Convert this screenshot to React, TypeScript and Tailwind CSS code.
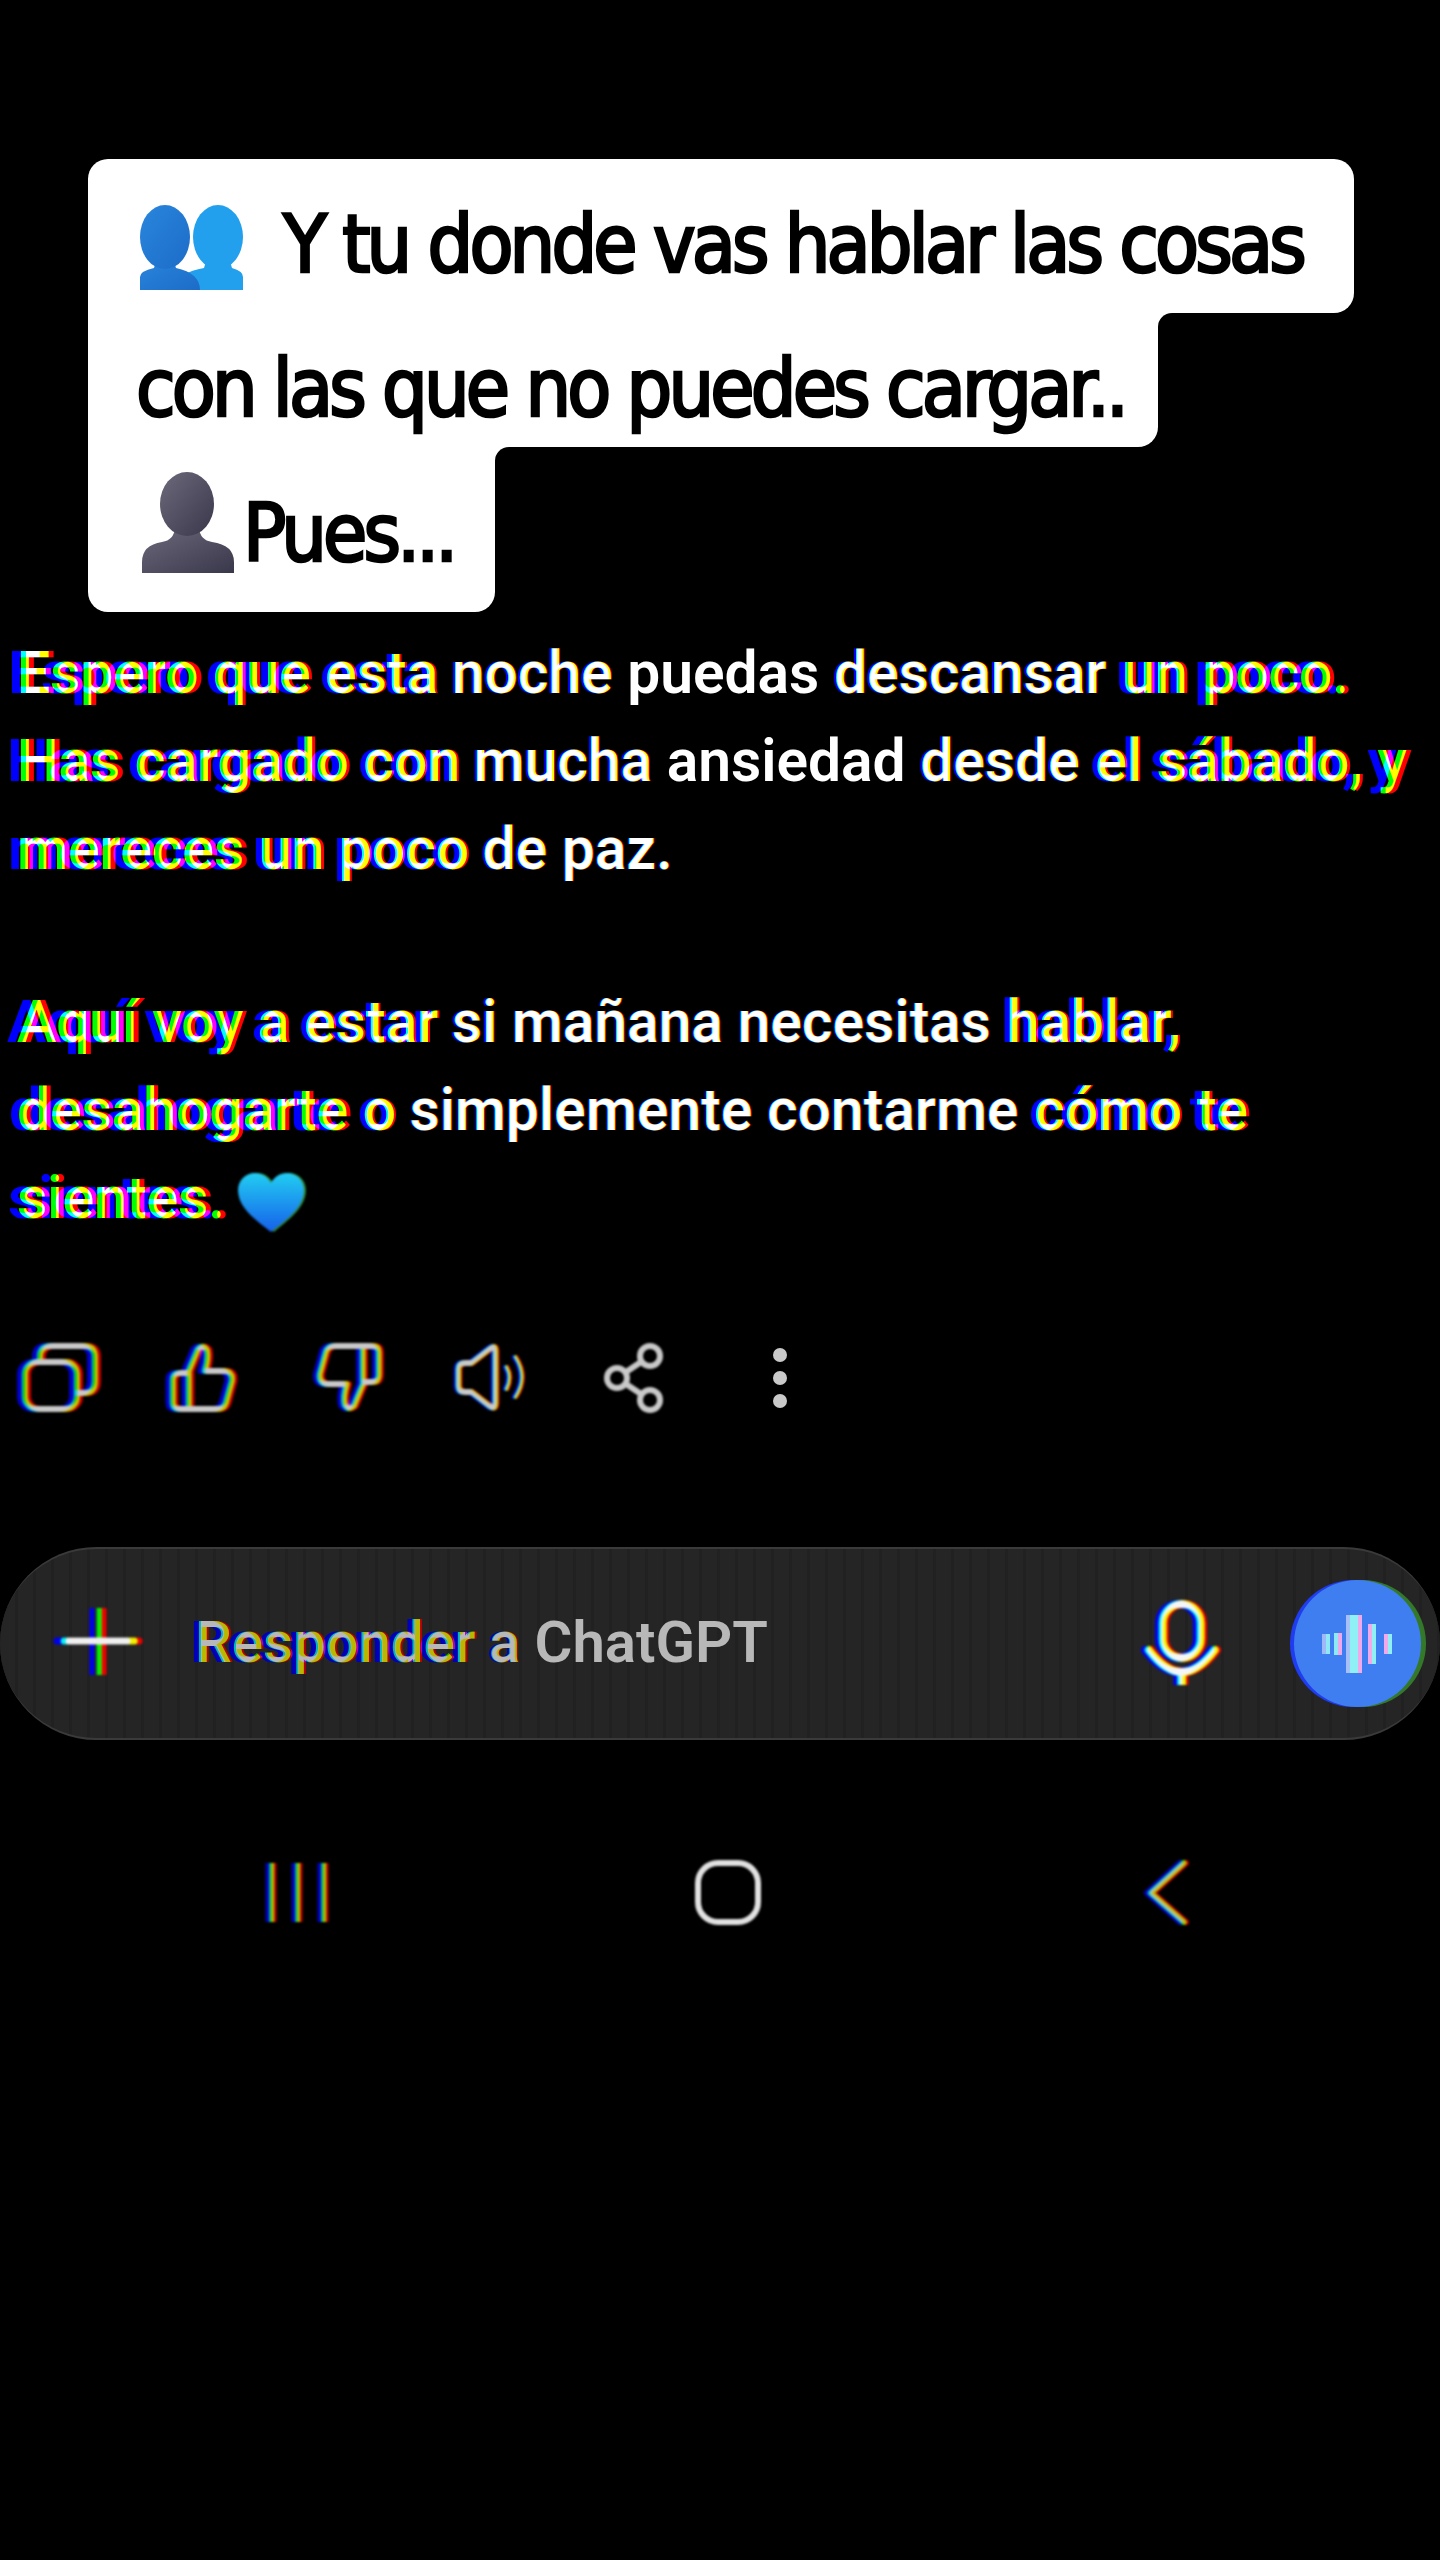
import React from "react";

const LEVELS = [1, 2, 3, 4, 5, 6, 7, 8, 9, 10];
const channel = (only: "r" | "g" | "b") => {
  const r = only === "r" ? 1 : 0;
  const g = only === "g" ? 1 : 0;
  const b = only === "b" ? 1 : 0;
  return `${r} 0 0 0 0  0 ${g} 0 0 0  0 0 ${b} 0 0  0 0 0 1 0`;
};

function ChromaDefs() {
  return (
    <svg width="0" height="0" className="absolute">
      <defs>
        {LEVELS.map((d) => (
          <filter
            key={d}
            id={`chroma${d}`}
            x="-30%"
            y="-10%"
            width="160%"
            height="120%"
            colorInterpolationFilters="sRGB"
          >
            <feOffset in="SourceGraphic" dx={-d} result="bo" />
            <feColorMatrix in="bo" values={channel("b")} result="bb" />
            <feOffset in="SourceGraphic" dx={d * 0.15} result="go" />
            <feColorMatrix in="go" values={channel("g")} result="gg" />
            <feOffset in="SourceGraphic" dx={d * 0.7} result="ro" />
            <feColorMatrix in="ro" values={channel("r")} result="rr" />
            <feBlend in="bb" in2="gg" mode="screen" result="m1" />
            <feBlend in="m1" in2="rr" mode="screen" result="m2" />
            <feGaussianBlur in="m2" stdDeviation="0.7" />
          </filter>
        ))}
      </defs>
    </svg>
  );
}

function wordFilter(x: number, k: number) {
  const r = Math.abs(x - 720) / 720;
  const d = Math.round(Math.pow(r, 1.3) * k);
  return d < 1 ? "blur(0.6px)" : `url(#chroma${Math.min(10, d)})`;
}

function Line({
  text,
  left = 16,
  charW = 28.3,
  k = 10,
  children,
}: {
  text: string;
  left?: number;
  charW?: number;
  k?: number;
  children?: React.ReactNode;
}) {
  let idx = 0;
  const words = text.split(" ");
  return (
    <div className="whitespace-nowrap">
      {words.map((w, i) => {
        const x = left + (idx + w.length / 2) * charW;
        idx += w.length + 1;
        return (
          <React.Fragment key={i}>
            <span className="inline-block" style={{ filter: wordFilter(x, k) }}>
              {w}
            </span>
            {i < words.length - 1 ? " " : ""}
          </React.Fragment>
        );
      })}
      {children}
    </div>
  );
}

function Chroma({
  w,
  h,
  d,
  level = 200,
  sw = 6,
  className = "",
  children,
}: {
  w: number;
  h: number;
  d: number;
  level?: number;
  sw?: number;
  className?: string;
  children: React.ReactNode;
}) {
  const layers: [string, number][] = [
    [`rgb(0,0,${level})`, -d],
    [`rgb(0,${level},0)`, d * 0.2],
    [`rgb(${level},0,0)`, d],
  ];
  return (
    <svg
      width={w}
      height={h}
      viewBox={`0 0 ${w} ${h}`}
      fill="none"
      strokeWidth={sw}
      strokeLinecap="round"
      strokeLinejoin="round"
      className={`block shrink-0 overflow-visible isolate blur-[0.9px] ${className}`}
    >
      {layers.map(([col, dx], i) => (
        <g key={i} stroke={col} transform={`translate(${dx} 0)`} className="mix-blend-screen">
          {children}
        </g>
      ))}
    </svg>
  );
}

const thumb =
  "M3 37 Q3 30 10 30 H18 L28 6 Q33 1 37 7 Q39 15 35 28 H55 Q63 29 62 38 L56 60 Q54 66 47 66 H10 Q3 66 3 60 Z M19 30 V66";

function People() {
  return (
    <svg width="103" height="85" viewBox="0 0 103 85" className="block shrink-0">
      <defs>
        <linearGradient id="pa" x1="0" y1="0" x2="1" y2="1">
          <stop offset="0" stopColor="#2a86dc" />
          <stop offset="1" stopColor="#1c6cc8" />
        </linearGradient>
      </defs>
      <path d="M43 85 V70 Q52 65 64 63 Q66 58 66 52 H90 Q90 58 92 63 Q103 66 103 72 V85 Z" fill="#22a0ee" />
      <ellipse cx="78" cy="32" rx="25" ry="32" fill="#22a0ee" />
      <path d="M0 85 V72 Q0 66 14 63 Q16 58 16 52 H34 Q34 58 36 63 Q60 68 60 85 Z" fill="url(#pa)" />
      <ellipse cx="25" cy="32" rx="25" ry="32" fill="url(#pa)" />
    </svg>
  );
}

function Person() {
  return (
    <svg width="92" height="101" viewBox="0 0 92 101" className="block shrink-0">
      <defs>
        <linearGradient id="pb" x1="0" y1="0" x2="1" y2="1">
          <stop offset="0" stopColor="#6b697a" />
          <stop offset="1" stopColor="#39374a" />
        </linearGradient>
      </defs>
      <path d="M0 101 V90 Q0 73 20 70 Q32 68 33 56 H57 Q58 68 70 70 Q92 73 92 90 V101 Z" fill="url(#pb)" />
      <ellipse cx="45" cy="32" rx="27" ry="32" fill="url(#pb)" />
    </svg>
  );
}

function Corner() {
  return (
    <div className="w-[16px] h-[16px] bg-white shrink-0">
      <div className="w-full h-full bg-black rounded-tl-[14px]" />
    </div>
  );
}

const hand =
  "font-['DejaVu_Sans',sans-serif] [font-stretch:condensed] font-normal text-[80px] leading-none text-black whitespace-nowrap tracking-[-3.8px] [-webkit-text-stroke:2.6px_black]";

function Bubble() {
  return (
    <div className="ml-[88px] flex flex-col items-start">
      <div className="w-[1266px] h-[154px] bg-white rounded-t-[20px] rounded-br-[20px] pl-[52px] pt-[46px] flex items-start">
        <People />
        <span className={`${hand} ml-[40px]`}>Y tu donde vas hablar las cosas</span>
      </div>
      <div className="flex items-start">
        <div className="w-[1070px] h-[134px] bg-white rounded-br-[20px] pl-[48px] pt-[36px]">
          <span className={hand}>con las que no puedes cargar..</span>
        </div>
        <Corner />
      </div>
      <div className="flex items-start">
        <div className="w-[407px] h-[165px] bg-white rounded-b-[20px] pl-[54px] pt-[25px] flex items-start">
          <Person />
          <span className={`${hand} ml-[9px] mt-[22px]`}>Pues...</span>
        </div>
        <Corner />
      </div>
    </div>
  );
}

function Heart() {
  return (
    <svg width="69" height="60" viewBox="0 0 69 60" className="inline-block align-[-14px] ml-[14px] blur-[0.8px]">
      <defs>
        <linearGradient id="h" x1="0" y1="0" x2="0" y2="1">
          <stop offset="0" stopColor="#22cdf2" />
          <stop offset="1" stopColor="#1660ea" />
        </linearGradient>
      </defs>
      <path d="M36 60 C20 48 2 36 2 18 C2 8 10 1 19 1 C26 1 32 5 35 11 C38 5 44 1 51 1 C60 1 68 8 68 18 C68 36 50 48 36 60 Z" fill="#2f8a30" />
      <path d="M33 60 C18 48 0 36 0 18 C0 8 8 1 17 1 C24 1 30 5 33 11 C36 5 42 1 49 1 C58 1 66 8 66 18 C66 36 48 48 33 60 Z" fill="url(#h)" />
    </svg>
  );
}

function Actions() {
  return (
    <div className="mt-[101px] h-[69px] pl-[21px] flex items-center">
      <Chroma w={75} h={69} d={4}>
        <path d="M18 17 V14 Q18 3 29 3 H62 Q73 3 73 14 V38 Q73 50 62 50 H57" />
        <rect x="3" y="19" width="52" height="47" rx="12" />
      </Chroma>
      <Chroma w={65} h={69} d={3.5} className="ml-[73px]">
        <path d={thumb} />
      </Chroma>
      <Chroma w={65} h={69} d={3} className="ml-[82px]">
        <g transform="rotate(180 32.5 34.5)">
          <path d={thumb} />
        </g>
      </Chroma>
      <Chroma w={73} h={69} d={1.5} className="ml-[74px]">
        <path d="M3 26 Q3 20 10 20 H16 L34 6 Q40 1 40 8 V60 Q40 67 34 63 L16 49 H10 Q3 49 3 43 Z" />
        <path d="M51 24 Q57 34 51 46" strokeWidth={4} />
        <path d="M60 14 Q73 34 60 54" strokeWidth={4} />
      </Chroma>
      <Chroma w={59} h={69} d={0} sw={6} className="ml-[76px]">
        <circle cx="46" cy="13" r="10" />
        <circle cx="13" cy="35" r="10" />
        <circle cx="46" cy="57" r="10" />
        <path d="M22 29 L37 19 M22 41 L37 51" />
      </Chroma>
      <div className="ml-[110px] flex flex-col gap-[9px] blur-[0.6px]">
        <div className="w-[14px] h-[14px] rounded-full bg-[#c9c9c9]" />
        <div className="w-[14px] h-[14px] rounded-full bg-[#c9c9c9]" />
        <div className="w-[14px] h-[14px] rounded-full bg-[#c9c9c9]" />
      </div>
    </div>
  );
}

function Wave() {
  const bars: [number, number, string, string][] = [
    [0, 20, "#9fb8f8", "#8fe8f5"],
    [12, 22, "#8fe8f5", "#f0a8e8"],
    [24, 58, "#a8c0f8", "#8ff0f5"],
    [32, 58, "#8ff0f5", "#f2a9ea"],
    [46, 40, "#f2a9ea", "#8ff0f5"],
    [62, 20, "#f2a9ea", "#8ff0f5"],
  ];
  return (
    <svg width="72" height="60" viewBox="0 0 72 60" className="block blur-[0.5px]">
      {bars.map(([x, h, a, b], i) => (
        <g key={i}>
          <rect x={x} y={30 - h / 2} width="4" height={h} fill={a} />
          <rect x={x + 4} y={30 - h / 2} width="4" height={h} fill={b} />
        </g>
      ))}
    </svg>
  );
}

function Composer() {
  return (
    <div className="mt-[135px] h-[193px] w-full rounded-full border-y-2 border-[#3a3a3a] bg-[repeating-linear-gradient(90deg,#252525_0px,#252525_15px,#212121_15px,#212121_18px)] pl-[57px] flex items-center">
      <Chroma w={81} h={71} d={6} sw={5} level={240} className="-mt-[4px]">
        <path d="M41 2 V69" strokeLinecap="butt" />
        <path d="M6 35 H76" strokeWidth={7} />
      </Chroma>
      <div className="ml-[56px] flex-1 font-['Roboto',sans-serif] font-semibold text-[58px] leading-none text-[#b8b8b8] -mt-[4px]">
        <Line text="Responder a ChatGPT" left={194} charW={30} k={8} />
      </div>
      <Chroma w={74} h={87} d={3} sw={8} level={245}>
        <rect x="18" y="4" width="38" height="54" rx="19" />
        <path d="M4 50 Q37 94 70 50" />
        <path d="M37 72 V85" strokeLinecap="butt" strokeWidth={9} />
      </Chroma>
      <div className="ml-[76px] mr-[19px] w-[127px] h-[127px] shrink-0 rounded-full bg-[#3f7ef0] shadow-[-4px_0_0_#1f3cf0,5px_0_0_#34792a] flex items-center justify-center">
        <Wave />
      </div>
    </div>
  );
}

function NavBar() {
  return (
    <div className="mt-[120px] pl-[266px] flex items-center h-[65px]">
      <Chroma w={62} h={65} d={3} sw={5} level={190}>
        <path d="M5 3 V62 M31 3 V62 M57 3 V62" strokeLinecap="butt" />
      </Chroma>
      <Chroma w={66} h={65} d={0} sw={6} level={225} className="ml-[367px]">
        <rect x="3" y="3" width="60" height="59" rx="20" />
      </Chroma>
      <Chroma w={42} h={65} d={3} sw={6} level={190} className="ml-[385px]">
        <path d="M37 3 L4 33 L37 62" />
      </Chroma>
    </div>
  );
}

export default function App() {
  return (
    <div className="w-[1440px] h-[2560px] bg-black overflow-hidden pt-[159px]">
      <ChromaDefs />
      <Bubble />
      <div className="mt-[17px] pl-[16px] font-['Roboto',sans-serif] font-semibold text-[58.7px] leading-[88px] text-white">
        <Line text="Espero que esta noche puedas descansar un poco." charW={28.3} />
        <Line text="Has cargado con mucha ansiedad desde el sábado, y" charW={28} />
        <Line text="mereces un poco de paz." charW={28.3} />
        <div className="mt-[85px]">
          <Line text="Aquí voy a estar si mañana necesitas hablar," charW={27} />
          <Line text="desahogarte o simplemente contarme cómo te" charW={29} />
          <Line text="sientes.">
            <Heart />
          </Line>
        </div>
      </div>
      <Actions />
      <Composer />
      <NavBar />
    </div>
  );
}
